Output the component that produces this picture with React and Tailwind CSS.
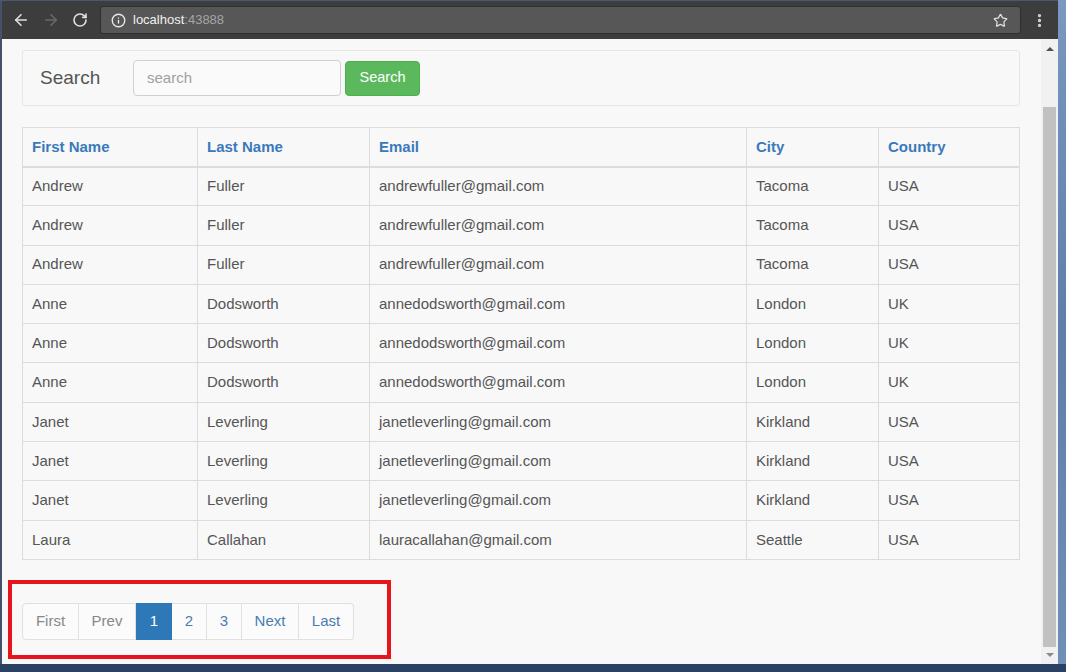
import React from "react";
import { ArrowLeft, ArrowRight, RotateCw, Info, Star, EllipsisVertical } from "lucide-react";

const rows = [
  ["Andrew", "Fuller", "andrewfuller@gmail.com", "Tacoma", "USA"],
  ["Andrew", "Fuller", "andrewfuller@gmail.com", "Tacoma", "USA"],
  ["Andrew", "Fuller", "andrewfuller@gmail.com", "Tacoma", "USA"],
  ["Anne", "Dodsworth", "annedodsworth@gmail.com", "London", "UK"],
  ["Anne", "Dodsworth", "annedodsworth@gmail.com", "London", "UK"],
  ["Anne", "Dodsworth", "annedodsworth@gmail.com", "London", "UK"],
  ["Janet", "Leverling", "janetleverling@gmail.com", "Kirkland", "USA"],
  ["Janet", "Leverling", "janetleverling@gmail.com", "Kirkland", "USA"],
  ["Janet", "Leverling", "janetleverling@gmail.com", "Kirkland", "USA"],
  ["Laura", "Callahan", "lauracallahan@gmail.com", "Seattle", "USA"],
];

const headers = ["First Name", "Last Name", "Email", "City", "Country"];
const widths = ["w-[175px]", "w-[172px]", "w-[377px]", "w-[132px]", "w-[141px]"];

export default function App() {
  return (
    <div
      className="relative w-[1066px] h-[672px] flex flex-col bg-[#2c4466] overflow-hidden"
      style={{ fontFamily: '"Liberation Sans", Arial, sans-serif' }}
    >
      <div className="flex flex-1 min-h-0">
        <div className="w-[1058px] flex flex-col">
          {/* Browser chrome */}
          <div className="h-[39px] bg-[#3d3d3d] border-t border-[#4a5870] flex items-center">
            <div className="w-[2px] self-stretch bg-[#44526a]" />
            <div className="flex items-center gap-[12px] pl-[10px] w-[98px]">
              <ArrowLeft size={18} color="#e0e0e0" strokeWidth={2.2} />
              <ArrowRight size={18} color="#6a6a6a" strokeWidth={2.2} />
              <RotateCw size={16} color="#e0e0e0" strokeWidth={2.4} />
            </div>
            <div className="w-[921px] h-[28px] bg-[#575757] border border-[#2e2e2e] rounded-[3px] flex items-center pl-[10px] pr-[12px]">
              <Info size={15} color="#e8e8e8" strokeWidth={2.2} />
              <span className="ml-[7px] text-[13px] text-[#f0f0f0]">localhost</span>
              <span className="text-[13px] text-[#a5a5a5]">:43888</span>
              <div className="flex-1" />
              <Star size={15} color="#e0e0e0" strokeWidth={2} />
            </div>
            <div className="flex-1 flex justify-center">
              <EllipsisVertical size={17} color="#d8d8d8" strokeWidth={2.6} />
            </div>
          </div>

          <div className="flex flex-1 min-h-0">
            <div className="w-[2px] bg-[#44526a]" />
            {/* Page content */}
            <div className="flex-1 bg-[#f8f8f8] pt-[11px] pl-[20px] pr-[21px]">
              <div className="h-[56px] border border-[#e6e6e6] rounded-[3px] flex items-center pl-[17px]">
                <span className="text-[19px] text-[#555] w-[93px]">Search</span>
                <div className="w-[208px] h-[36px] bg-[#fafafa] border border-[#d0d0d0] rounded-[4px] flex items-center pl-[13px] text-[15px] text-[#a0a0a0]">
                  search
                </div>
                <div className="ml-[4px] w-[75px] h-[35px] bg-[#5cb85c] border border-[#4cae4c] rounded-[4px] flex items-center justify-center text-[14.5px] text-white">
                  Search
                </div>
              </div>

              <table className="mt-[21px] border-collapse w-[998px] text-[15px] table-fixed">
                <thead>
                  <tr className="h-[39px]">
                    {headers.map((h, i) => (
                      <th
                        key={h}
                        className={`${widths[i]} border border-[#dcdcdc] border-b-2 text-left font-bold text-[#3a7abb] pl-[9px]`}
                      >
                        {h}
                      </th>
                    ))}
                  </tr>
                </thead>
                <tbody>
                  {rows.map((r, ri) => (
                    <tr key={ri} className="h-[39.3px]">
                      {r.map((c, ci) => (
                        <td key={ci} className="border border-[#dcdcdc] pl-[9px] text-[#555]">
                          {c}
                        </td>
                      ))}
                    </tr>
                  ))}
                </tbody>
              </table>

              <div className="mt-[43px] flex h-[37px] text-[15px] w-fit">
                <div className="w-[57px] flex items-center justify-center border border-[#e0e0e0] rounded-l-[4px] bg-[#fbfbfb] text-[#888]">First</div>
                <div className="w-[57px] flex items-center justify-center border border-l-0 border-[#e0e0e0] bg-[#fbfbfb] text-[#888]">Prev</div>
                <div className="w-[36px] flex items-center justify-center bg-[#2f78b8] border border-[#2f78b8] text-white">1</div>
                <div className="w-[35px] flex items-center justify-center border border-l-0 border-[#e0e0e0] bg-[#fbfbfb] text-[#4a7cb0]">2</div>
                <div className="w-[35px] flex items-center justify-center border border-l-0 border-[#e0e0e0] bg-[#fbfbfb] text-[#4a7cb0]">3</div>
                <div className="w-[57px] flex items-center justify-center border border-l-0 border-[#e0e0e0] bg-[#fbfbfb] text-[#4a7cb0]">Next</div>
                <div className="w-[55px] flex items-center justify-center border border-l-0 border-[#e0e0e0] rounded-r-[4px] bg-[#fbfbfb] text-[#4a7cb0]">Last</div>
              </div>
            </div>

            {/* Scrollbar */}
            <div className="w-[17px] bg-[#f1f1f1] flex flex-col items-center">
              <div className="h-[16px] flex items-center justify-center mt-[2px]">
                <div className="w-0 h-0 border-l-[4px] border-r-[4px] border-b-[4px] border-l-transparent border-r-transparent border-b-[#505050]" />
              </div>
              <div className="mt-[50px] w-[13px] flex-1 bg-[#c1c1c1]" />
              <div className="h-[16px] flex items-center justify-center mb-[1px]">
                <div className="w-0 h-0 border-l-[4px] border-r-[4px] border-t-[4px] border-l-transparent border-r-transparent border-t-[#8a8a8a]" />
              </div>
            </div>
          </div>
        </div>
        {/* Right window frame */}
        <div className="w-[8px] bg-gradient-to-b from-[#7a98c0] via-[#5d7fa8] to-[#6f8fb6]" />
      </div>
      <div className="h-[8px] bg-[#2a4163]" />

      {/* Red annotation box */}
      <div className="absolute left-[8px] top-[580px] w-[383px] h-[79px] border-[4px] border-[#e8141c]" />
    </div>
  );
}
